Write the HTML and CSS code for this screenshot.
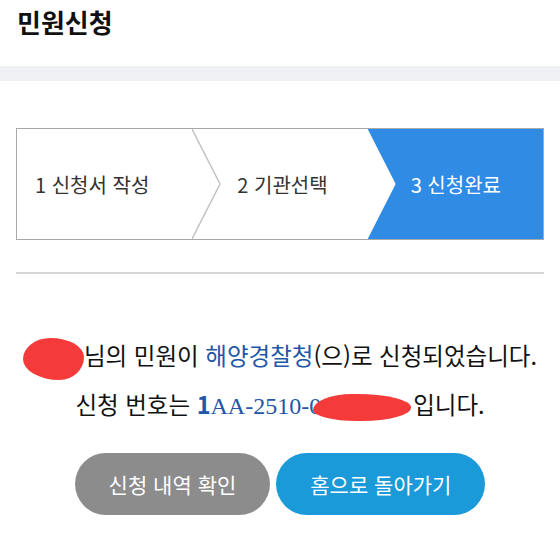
FILE: index.html
```html
<!DOCTYPE html>
<html lang="ko">
<head>
<meta charset="UTF-8" />
<meta name="viewport" content="width=device-width, initial-scale=1" />
<title>민원신청</title>
<link rel="stylesheet" href="styles.css">
</head>
<body>

<header class="page-head">
  <h1>민원신청</h1>
</header>
<div class="band"></div>

<main class="content">
  <ol class="steps">
    <li class="step">1 신청서 작성</li>
    <li class="step">
      <svg class="chevron" viewBox="0 0 30 110" preserveAspectRatio="none"><polyline points="0,0 28,55 0,110" /></svg>
      2 기관선택
    </li>
    <li class="step active">3 신청완료</li>
  </ol>

  <hr class="divider">

  <div class="result">
    <p><span class="redact name"></span>님의 민원이 <span class="org">해양경찰청</span>(으)로 신청되었습니다.</p>
    <p>신청 번호는 <span class="num"><b>1</b><span class="serif">AA-2510-0</span></span><span class="redact code"></span>입니다.</p>
  </div>

  <div class="actions">
    <button class="btn grey">신청 내역 확인</button>
    <button class="btn blue">홈으로 돌아가기</button>
  </div>
</main>

</body>
</html>
```

FILE: styles.css
```css
body {
  margin: 0;
  font-family: "Noto Sans CJK KR", "Noto Sans", sans-serif;
  color: #111;
  background: #fff;
}

.page-head {
  padding: 4px 17px 0;
  height: 62px;
}
.page-head h1 {
  margin: 0;
  font-size: 26px;
  font-weight: 700;
  line-height: 36px;
}

.band {
  height: 15px;
  background: #eff0f3;
}

.content {
  padding: 47px 16px 0;
}

.steps {
  list-style: none;
  margin: 0;
  padding: 0;
  display: grid;
  grid-template-columns: repeat(3, 1fr);
  height: 110px;
  border: 1px solid #a9a9a9;
}
.step {
  position: relative;
  display: flex;
  align-items: center;
  padding-left: 45px;
  font-size: 20px;
  color: #333;
}
.step:first-child {
  padding-left: 18px;
}
.chevron {
  position: absolute;
  left: 0;
  top: 0;
  width: 30px;
  height: 100%;
}
.chevron polyline {
  fill: none;
  stroke: #c4c4c4;
  stroke-width: 1.5;
}
.step.active {
  background: #308be5;
  color: #fff;
  padding-left: 43px;
  clip-path: polygon(0 0, 100% 0, 100% 100%, 0 100%, 28px 50%);
}

.divider {
  margin: 32px 0 0;
  border: none;
  border-top: 2px solid #d6d6d6;
}

.result {
  margin-top: 57px;
  text-align: center;
  font-size: 23.5px;
  line-height: 49px;
}
.result p {
  margin: 0;
  white-space: nowrap;
}
.org,
.num {
  color: #2456a8;
}
.num b {
  font-weight: 700;
}
.serif {
  font-family: "Liberation Serif", serif;
  font-size: 24px;
}
.redact {
  display: inline-block;
  vertical-align: middle;
  background: #f53a3a;
}
.redact.name {
  width: 61px;
  height: 42px;
  border-radius: 45% 55% 40% 60% / 50% 45% 55% 50%;
}
.redact.code {
  width: 98px;
  height: 27px;
  margin-left: -8px;
  margin-right: 2px;
  border-radius: 40% 55% 50% 45% / 60% 50% 50% 40%;
}

.actions {
  margin-top: 22px;
  display: flex;
  justify-content: center;
  gap: 6px;
}
.btn {
  height: 62px;
  padding: 0 34px;
  border: none;
  border-radius: 31px;
  font-family: inherit;
  font-size: 21px;
  color: #fff;
}
.btn.grey {
  background: #8c8c8c;
}
.btn.blue {
  background: #1a9ad8;
}
```
